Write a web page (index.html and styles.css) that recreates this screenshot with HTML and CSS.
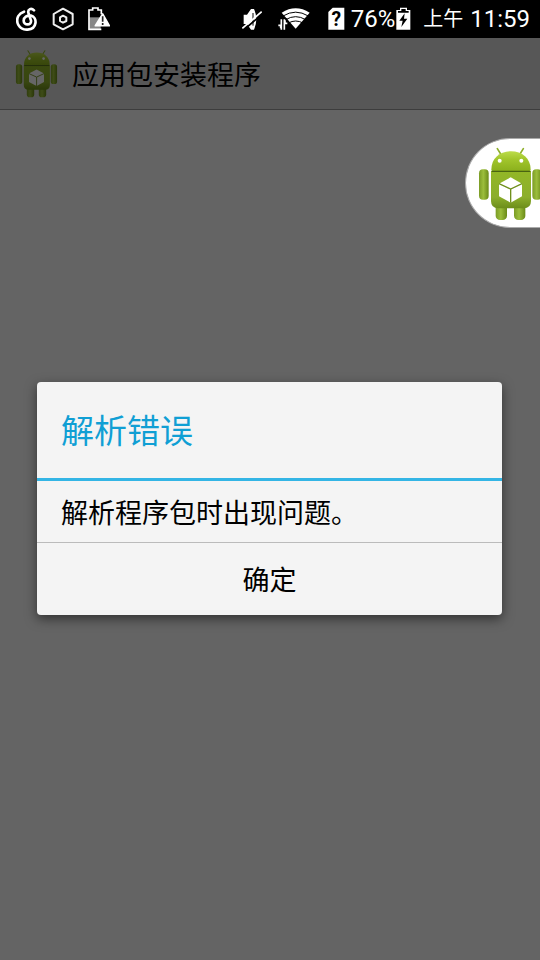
FILE: index.html
```
<!DOCTYPE html>
<html lang="zh-CN">
  <head>
    <meta charset="UTF-8">
    <meta name="viewport" content="width=device-width, initial-scale=1.0">
    <title>应用包安装程序</title>
    <link rel="stylesheet" href="styles.css">
  </head>

  <body>

    <!-- Android robot, used in the app bar and in the floating bubble -->
    <svg class="defs" width="0" height="0" aria-hidden="true">
      <defs>
        <linearGradient id="head" x1="0" y1="0" x2="0" y2="1">
          <stop offset="0" stop-color="#bcdc4a"/>
          <stop offset="0.4" stop-color="#a2c62c"/>
          <stop offset="1" stop-color="#8bb01c"/>
        </linearGradient>
        <linearGradient id="torso" x1="0" y1="0" x2="0" y2="1">
          <stop offset="0" stop-color="#93b727"/>
          <stop offset="0.7" stop-color="#8cae2c"/>
          <stop offset="1" stop-color="#6c8d1a"/>
        </linearGradient>
        <linearGradient id="limb" x1="0" y1="0" x2="1" y2="0">
          <stop offset="0" stop-color="#7b9c26"/>
          <stop offset="0.45" stop-color="#9cbe3c"/>
          <stop offset="1" stop-color="#6a8a18"/>
        </linearGradient>
        <symbol id="robot" viewBox="84 62 195 225">
          <path d="M142 70l10 16M220 70l-10 16" stroke="#8fb02c" stroke-width="5" stroke-linecap="round"/>
          <rect x="137" y="222" width="34" height="62" rx="13" fill="url(#limb)"/>
          <rect x="192" y="222" width="34" height="62" rx="13" fill="url(#limb)"/>
          <rect x="87" y="132" width="29" height="91" rx="12" fill="url(#limb)"/>
          <rect x="247" y="132" width="29" height="91" rx="12" fill="url(#limb)"/>
          <path d="M123 137h120v90q0 22-22 22h-76q-22 0-22-22z" fill="url(#torso)"/>
          <path d="M124 133c0-34 26-55 59-55s59 21 59 55q0 4-4 4h-110q-4 0-4-4z" fill="url(#head)"/>
          <path d="M125 138h116" stroke="#4a6412" stroke-width="4"/>
          <circle cx="149" cy="106" r="6" fill="#fff"/>
          <circle cx="214" cy="106" r="6" fill="#fff"/>
          <path d="M182 156l34 19v38l-34 19-35-19v-38z" fill="#fff"/>
          <path d="M147 175l35 16 34-16M182 191v41" fill="none" stroke="#6f8f1c" stroke-width="4"/>
        </symbol>
      </defs>
    </svg>

    <div class="status-bar">
      <div class="notifications">
        <svg width="22" height="24" viewBox="48 22 66 72">
          <path d="M102 32c-8-8-19-4-17 7l8 24c2 15-22 15-22 0 0-10 10-17 22-15 20 5 19 40-10 42-27 1-37-24-28-41q5-9 17-13" fill="none" stroke="#fff" stroke-width="8" stroke-linecap="round"/>
        </svg>
        <svg width="22" height="24" viewBox="157 22 66 72">
          <path d="M190 27l29 16v31l-29 15-28-15v-31z" fill="none" stroke="#eee" stroke-width="6" stroke-linejoin="round"/>
          <path d="M190 48l10 5v11l-10 5-9-5v-11z" fill="none" stroke="#eee" stroke-width="6" stroke-linejoin="round"/>
        </svg>
        <svg width="22" height="24" viewBox="264 22 66 72">
          <path d="M268 53h34v37h-34z" fill="#888"/>
          <path d="M304 44v-13h-10v-6h-16v6h-11v58h37" fill="none" stroke="#fff" stroke-width="5"/>
          <path d="M308 43l20 35h-42z" fill="#fff" stroke="#fff" stroke-width="5" stroke-linejoin="round"/>
          <path d="M308 50v16M308 70v6" stroke="#222" stroke-width="5"/>
        </svg>
      </div>

      <div class="system">
        <svg class="mute" width="20" height="24" viewBox="33 24 60 72">
          <path d="M38 47h10l12-17h9q14 30 0 62h-9l-12-17h-10z" fill="#fff"/>
          <path d="M66 42v38" stroke="#000" stroke-width="3"/>
          <path d="M38 93l57-49" stroke="#000" stroke-width="5"/>
          <path d="M34 88l58-50" stroke="#fff" stroke-width="5"/>
        </svg>
        <svg class="wifi" width="32" height="24" viewBox="141 24 96 72">
          <path d="M152 41q42-26 84 0l-42 48z" fill="#fff"/>
          <path d="M156 51q38-23 76 0M164 62q30-18 60 0M172 72q22-12 44 0" fill="none" stroke="#000" stroke-width="3"/>
          <path d="M138 58h29l10 18v16h-39z" fill="#000"/>
          <path d="M151 61v31M142 79h7v9M160 92v-31M169 73h-7v-9" fill="none" stroke="#fff" stroke-width="5"/>
        </svg>
        <svg class="sim" width="17" height="24" viewBox="290 22 51 72">
          <path d="M304 24h35v66h-48v-53z" fill="#fff"/>
          <text class="sim-mark" x="315" y="78" text-anchor="middle">?</text>
        </svg>
        <span class="percent">76%</span>
        <svg class="battery" width="15" height="24" viewBox="53 19 45 72">
          <path d="M65 21h21v7h10v59h-42v-59h11z" fill="#fff"/>
          <path d="M69 25h13v6h9v5h-32v-5h10z" fill="#000"/>
          <path d="M79 38l-16 22h10l-4 19 18-25h-10z" fill="#000"/>
        </svg>
        <span class="ampm">上午</span>
        <span class="time">11:59</span>
      </div>
    </div>

    <div class="screen">
      <header class="app-bar">
        <svg class="app-icon"><use href="#robot"/></svg>
        <h1>应用包安装程序</h1>
      </header>

      <!-- Dims the app behind the dialog -->
      <div class="scrim">
        <div class="dialog" role="alertdialog" aria-labelledby="dialog-title" aria-describedby="dialog-text">
          <h2 id="dialog-title">解析错误</h2>
          <p id="dialog-text">解析程序包时出现问题。</p>
          <button type="button">确定</button>
        </div>
      </div>

      <div class="bubble">
        <svg class="bubble-icon"><use href="#robot"/></svg>
      </div>
    </div>

  </body>
</html>
```

FILE: styles.css
```
* { box-sizing: border-box; }

body {
	background-color: #000;
	color: #000;
	display: flex;
	flex-direction: column;
	font-family: Roboto, "Noto Sans CJK SC", sans-serif;
	font-size: 27px;
	margin: 0;
	min-height: 100vh;
}

h1, h2, p {
	font-weight: normal;
	margin: 0;
}

h1 { font-size: 27px; }

svg {
	display: block;
	flex: none;
}

.defs { position: absolute; }

/* Status bar */
.status-bar {
	align-items: center;
	color: #fff;
	display: flex;
	font-size: 24px;
	height: 38px;
	justify-content: space-between;
	line-height: 38px;
	padding: 0 10px 0 16px;
}

.notifications {
	display: flex;
	gap: 14px;
}

.system {
	align-items: center;
	display: flex;
}

.wifi { margin-left: 16px; }
.sim { margin-left: 18px; }
.percent { margin-left: 6px; }
.battery { margin-left: 1px; }

.sim-mark {
	font-family: Roboto, sans-serif;
	font-size: 58px;
	font-weight: bold;
}

.ampm {
	font-size: 20px;
	margin-left: 12px;
}

.time { margin-left: 7px; }

/* App behind the dialog */
.screen {
	background-color: #f9f9f9;
	flex: 1;
	overflow: hidden;
	position: relative;
}

.app-bar {
	align-items: center;
	background-color: #dadada;
	border-bottom: 1px solid #999;
	display: flex;
	gap: 14px;
	height: 72px;
	padding: 0 15px;
}

.app-icon {
	height: 49px;
	width: 43px;
}

/* Dialog */
.scrim {
	align-items: center;
	background-color: rgba(0, 0, 0, 0.6);
	display: flex;
	inset: 0;
	justify-content: center;
	padding: 0 38px 2px 37px;
	position: absolute;
}

.dialog {
	background-color: #f4f4f4;
	border-radius: 4px;
	box-shadow: 0 4px 12px rgba(0, 0, 0, 0.5);
	display: flex;
	flex-direction: column;
	overflow: hidden;
	width: 100%;
}

.dialog h2 {
	border-bottom: 3px solid #33b5e5;
	color: #109fd4;
	font-size: 33px;
	line-height: 48px;
	padding: 26px 24px 22px;
}

.dialog p {
	line-height: 40px;
	padding: 13px 24px 8px;
}

.dialog button {
	background: none;
	border: 0;
	border-top: 1px solid #bbb;
	color: inherit;
	cursor: pointer;
	font: inherit;
	line-height: 40px;
	padding: 18px 16px 14px;
}

/* Floating bubble, docked on the right edge */
.bubble {
	background-color: #fff;
	border: 1px solid #aaa;
	border-radius: 45px 0 0 45px;
	border-right: 0;
	height: 90px;
	overflow: hidden;
	padding: 7px 0 0 12px;
	position: absolute;
	right: 0;
	top: 100px;
	width: 75px;
}

.bubble-icon {
	height: 75px;
	width: 65px;
}
```
